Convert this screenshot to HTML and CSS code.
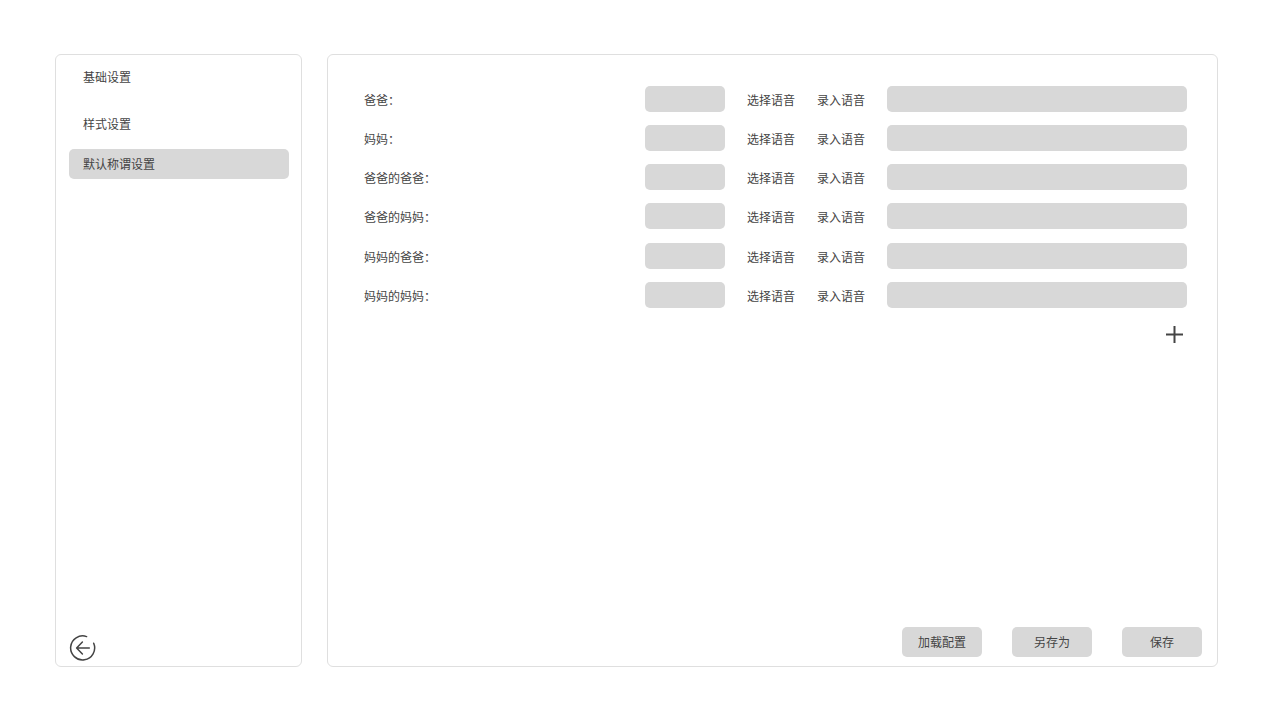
FILE: index.html
```html
<!DOCTYPE html>
<html lang="zh-CN">
<head>
<meta charset="utf-8">
<meta name="viewport" content="width=device-width, initial-scale=1">
<title>默认称谓设置</title>
<link rel="stylesheet" href="styles.css">
</head>
<body>
<div class="page">
  <aside class="panel sidebar">
    <nav class="nav">
      <a class="nav-item nav-item-main" href="#basic">基础设置</a>
      <a class="nav-item" href="#style">样式设置</a>
      <a class="nav-item active" href="#names" aria-current="page">默认称谓设置</a>
    </nav>
    <button class="icon-button" type="button" aria-label="返回">
      <svg width="28" height="28" viewBox="0 0 28 28" fill="none" stroke="#444" stroke-width="1.5" stroke-linecap="round" stroke-linejoin="round">
        <path d="M17.6 2.6A12 12 0 1 0 24.7 9.3"/>
        <path d="M20.3 14H7.8M13.4 8L7.6 14l5.8 6"/>
      </svg>
    </button>
  </aside>
  <main class="panel content">
    <form class="form">
      <div class="row">
        <label class="label" for="n1">爸爸：</label>
        <input class="field field-short" id="n1" type="text">
        <button class="link-button" type="button">选择语音</button>
        <button class="link-button" type="button">录入语音</button>
        <input class="field field-long" type="text" aria-label="爸爸语音">
      </div>
      <div class="row">
        <label class="label" for="n2">妈妈：</label>
        <input class="field field-short" id="n2" type="text">
        <button class="link-button" type="button">选择语音</button>
        <button class="link-button" type="button">录入语音</button>
        <input class="field field-long" type="text" aria-label="妈妈语音">
      </div>
      <div class="row">
        <label class="label" for="n3">爸爸的爸爸：</label>
        <input class="field field-short" id="n3" type="text">
        <button class="link-button" type="button">选择语音</button>
        <button class="link-button" type="button">录入语音</button>
        <input class="field field-long" type="text" aria-label="爸爸的爸爸语音">
      </div>
      <div class="row row-group">
        <label class="label" for="n4">爸爸的妈妈：</label>
        <input class="field field-short" id="n4" type="text">
        <button class="link-button" type="button">选择语音</button>
        <button class="link-button" type="button">录入语音</button>
        <input class="field field-long" type="text" aria-label="爸爸的妈妈语音">
      </div>
      <div class="row">
        <label class="label" for="n5">妈妈的爸爸：</label>
        <input class="field field-short" id="n5" type="text">
        <button class="link-button" type="button">选择语音</button>
        <button class="link-button" type="button">录入语音</button>
        <input class="field field-long" type="text" aria-label="妈妈的爸爸语音">
      </div>
      <div class="row">
        <label class="label" for="n6">妈妈的妈妈：</label>
        <input class="field field-short" id="n6" type="text">
        <button class="link-button" type="button">选择语音</button>
        <button class="link-button" type="button">录入语音</button>
        <input class="field field-long" type="text" aria-label="妈妈的妈妈语音">
      </div>
      <button class="icon-button add" type="button" aria-label="添加">
        <svg width="18" height="18" viewBox="0 0 18 18" fill="none" stroke="#444" stroke-width="2">
          <path d="M1 9.5h17M9.5 1v17"/>
        </svg>
      </button>
    </form>
    <footer class="actions">
      <button class="button" type="button">加载配置</button>
      <button class="button" type="button">另存为</button>
      <button class="button" type="button">保存</button>
    </footer>
  </main>
</div>
</body>
</html>
```
FILE: styles.css
```css
* {
  box-sizing: border-box;
}

body {
  margin: 0;
  background: #fff;
  color: #444;
  font: 12px/18px "Noto Sans CJK SC", sans-serif;
}

button,
input {
  margin: 0;
  padding: 0;
  border: 0;
  background: none;
  color: inherit;
  font: inherit;
}

button {
  cursor: pointer;
}

svg {
  display: block;
}

.page {
  display: flex;
  gap: 25px;
  min-height: 100vh;
  padding: 54px 62px 53px 55px;
}

.panel {
  display: flex;
  flex-direction: column;
  justify-content: space-between;
  border: 1px solid #dfdfdf;
  border-radius: 6px;
}

.sidebar {
  flex: 0 0 247px;
  align-items: flex-start;
  padding: 7px 12px 4px 13px;
}

.nav {
  display: flex;
  flex-direction: column;
  align-self: stretch;
  gap: 10px;
}

.nav-item {
  padding: 6px 14px;
  border-radius: 5px;
  color: inherit;
  text-decoration: none;
}

.nav-item-main {
  margin-bottom: 7px;
}

.nav-item.active {
  background: #d8d8d8;
}

.content {
  flex: 1;
  padding: 31px 15px 9px 36px;
}

.form {
  display: flex;
  flex-direction: column;
  gap: 13px;
  padding-right: 15px;
}

.row {
  display: flex;
  align-items: center;
  gap: 22px;
}

.row-group {
  margin-bottom: 1px;
}

.label {
  flex: 1;
  padding-top: 2px;
}

.link-button {
  padding-top: 2px;
  white-space: nowrap;
}

.field {
  height: 26px;
  padding: 0 8px;
  border-radius: 5px;
  background: #d8d8d8;
}

.field-short {
  width: 80px;
}

.field-long {
  width: 300px;
}

.add {
  align-self: flex-end;
  margin: 4px 4px 0 0;
}

.actions {
  display: flex;
  justify-content: flex-end;
  gap: 30px;
}

.button {
  width: 80px;
  height: 30px;
  border-radius: 5px;
  background: #d8d8d8;
}
```
